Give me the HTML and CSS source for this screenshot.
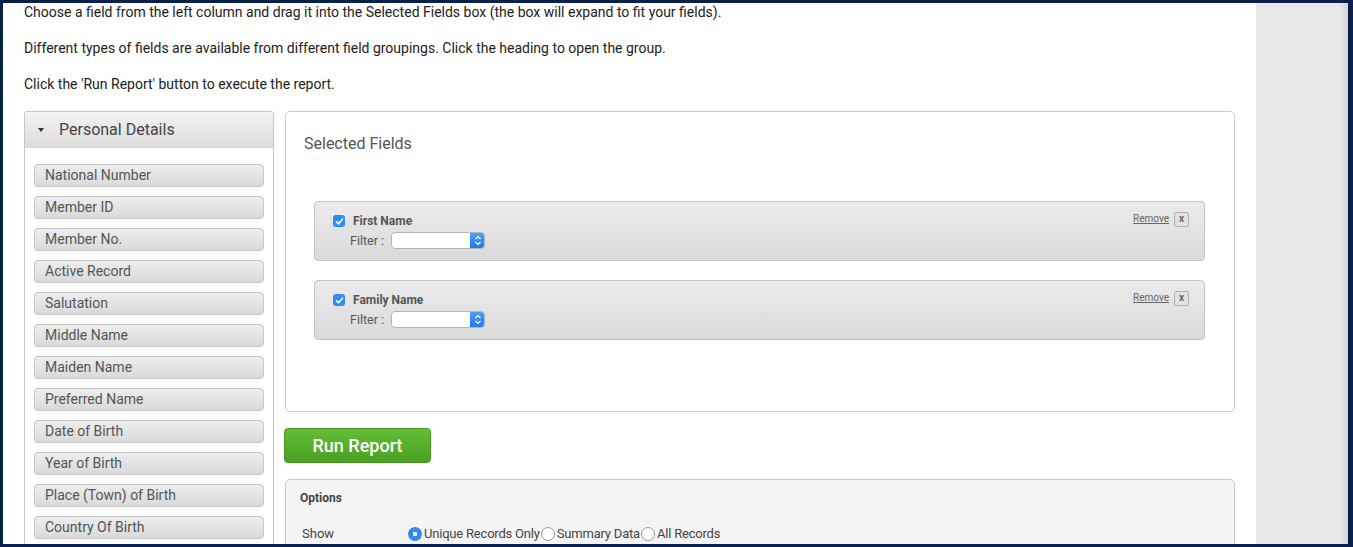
FILE: index.html
```html
<!DOCTYPE html>
<html>
<head>
<meta charset="utf-8">
<link rel="stylesheet" href="styles.css">
</head>
<body>
<div class="window">
  <div class="main">
    <p class="intro">Choose a field from the left column and drag it into the Selected Fields box (the box will expand to fit your fields).</p>
    <p class="intro">Different types of fields are available from different field groupings. Click the heading to open the group.</p>
    <p class="intro">Click the 'Run Report' button to execute the report.</p>
    <div class="builder">
      <div class="fields-panel">
        <div class="group-head"><span class="caret"></span>Personal Details</div>
        <div class="field-list">
          <div class="field-item">National Number</div>
          <div class="field-item">Member ID</div>
          <div class="field-item">Member No.</div>
          <div class="field-item">Active Record</div>
          <div class="field-item">Salutation</div>
          <div class="field-item">Middle Name</div>
          <div class="field-item">Maiden Name</div>
          <div class="field-item">Preferred Name</div>
          <div class="field-item">Date of Birth</div>
          <div class="field-item">Year of Birth</div>
          <div class="field-item">Place (Town) of Birth</div>
          <div class="field-item">Country Of Birth</div>
        </div>
      </div>
      <div class="right-col">
        <div class="selected-box">
          <h2 class="selected-title">Selected Fields</h2>
          <div class="selected-list">
            <div class="sel-row">
              <div class="sel-main">
                <div class="sel-name"><span class="check"><svg width="9" height="9" viewBox="0 0 9 9"><path d="M1.5 4.8 L3.6 6.8 L7.5 2.2" fill="none" stroke="#fff" stroke-width="1.6" stroke-linecap="round" stroke-linejoin="round"/></svg></span>First Name</div>
                <div class="sel-filter">Filter :<span class="select"><span class="sel-arrow"><svg width="8" height="11" viewBox="0 0 8 11"><path d="M1.5 4 L4 1.5 L6.5 4 M1.5 7 L4 9.5 L6.5 7" fill="none" stroke="#fff" stroke-width="1.2"/></svg></span></span></div>
              </div>
              <div class="sel-actions"><a class="remove">Remove</a><span class="xbtn">x</span></div>
            </div>
            <div class="sel-row">
              <div class="sel-main">
                <div class="sel-name"><span class="check"><svg width="9" height="9" viewBox="0 0 9 9"><path d="M1.5 4.8 L3.6 6.8 L7.5 2.2" fill="none" stroke="#fff" stroke-width="1.6" stroke-linecap="round" stroke-linejoin="round"/></svg></span>Family Name</div>
                <div class="sel-filter">Filter :<span class="select"><span class="sel-arrow"><svg width="8" height="11" viewBox="0 0 8 11"><path d="M1.5 4 L4 1.5 L6.5 4 M1.5 7 L4 9.5 L6.5 7" fill="none" stroke="#fff" stroke-width="1.2"/></svg></span></span></div>
              </div>
              <div class="sel-actions"><a class="remove">Remove</a><span class="xbtn">x</span></div>
            </div>
          </div>
        </div>
        <button class="run-btn">Run Report</button>
        <div class="options">
          <div class="options-title">Options</div>
          <div class="opt-row">
            <span class="opt-label">Show</span>
            <span class="radios">
              <span class="radio on"></span><span class="rlabel">Unique Records Only</span>
              <span class="radio"></span><span class="rlabel">Summary Data</span>
              <span class="radio"></span><span class="rlabel">All Records</span>
            </span>
          </div>
        </div>
      </div>
    </div>
  </div>
  <div class="sidebar"></div>
</div>
</body>
</html>
```
FILE: styles.css
```css
html, body {
  margin: 0;
  padding: 0;
  height: 100%;
  overflow: hidden;
}
body {
  background: #0b1f4d;
  font-family: Roboto, "Liberation Sans", sans-serif;
  color: #333;
}
.window {
  margin: 3px 5px 0 3px;
  height: 541px;
  display: flex;
  overflow: hidden;
}
.main {
  width: 1253px;
  flex: none;
  background: #fff;
  padding-left: 21px;
  box-sizing: border-box;
}
.sidebar {
  flex: 1;
  background: linear-gradient(to right, #e8e8e8 0, #e8e8e8 84px, #d4d4d4 92px);
}
.intro {
  margin: 0 0 18px;
  font-size: 14px;
  line-height: 18px;
  color: #222;
}
.builder {
  display: flex;
  align-items: flex-start;
  gap: 10px;
}
.fields-panel {
  width: 250px;
  flex: none;
  box-sizing: border-box;
  border: 1px solid #c4c4c4;
  border-radius: 3px 3px 0 0;
}
.group-head {
  height: 35px;
  display: flex;
  align-items: center;
  padding-left: 13px;
  font-size: 16px;
  color: #444;
  background: linear-gradient(#f3f3f3, #dcdcdc);
  border-bottom: 1px solid #d6d6d6;
}
.caret {
  width: 0;
  height: 0;
  border-left: 3.5px solid transparent;
  border-right: 3.5px solid transparent;
  border-top: 4px solid #333;
  margin-right: 15px;
  margin-top: 1px;
}
.field-list {
  padding: 16px 9px 20px;
  display: flex;
  flex-direction: column;
  gap: 9px;
}
.field-item {
  height: 23px;
  box-sizing: border-box;
  border: 1px solid #c6c6c6;
  border-radius: 4px;
  background: linear-gradient(#ededed, #dadada);
  padding-left: 10px;
  font-size: 14px;
  line-height: 21px;
  color: #555;
}
.right-col {
  width: 952px;
  flex: none;
  display: flex;
  flex-direction: column;
  align-items: flex-start;
}
.selected-box {
  width: 950px;
  box-sizing: border-box;
  height: 301px;
  border: 1px solid #c8c8c8;
  border-radius: 5px;
  margin-left: 1px;
}
.selected-title {
  margin: 0;
  padding: 22px 0 0 18px;
  font-size: 16px;
  font-weight: normal;
  line-height: 20px;
  color: #555;
}
.selected-list {
  margin: 47px 29px 0 28px;
  display: flex;
  flex-direction: column;
  gap: 19px;
}
.sel-row {
  height: 60px;
  box-sizing: border-box;
  border: 1px solid #c4c4c4;
  border-radius: 4px;
  background: linear-gradient(#ebebeb, #dadada);
  display: flex;
  justify-content: space-between;
  padding: 11px 15px 0 18px;
}
.sel-name {
  display: flex;
  align-items: center;
  font-size: 12px;
  font-weight: bold;
  color: #555;
  height: 16px;
}
.check {
  width: 12px;
  height: 12px;
  border-radius: 3px;
  background: #2f8cf0;
  display: inline-flex;
  align-items: center;
  justify-content: center;
  margin-right: 8px;
}
.sel-filter {
  margin-top: 3px;
  padding-left: 17px;
  display: flex;
  align-items: center;
  font-size: 12.5px;
  color: #555;
}
.select {
  margin-left: 7px;
  width: 94px;
  height: 17px;
  box-sizing: border-box;
  border: 1px solid #b5b5b5;
  border-radius: 4px;
  background: #fff;
  display: flex;
  justify-content: flex-end;
  overflow: hidden;
}
.sel-arrow {
  width: 15px;
  height: 17px;
  margin: -1px -1px 0 0;
  background: linear-gradient(#4ea1fb, #1e78f0);
  display: flex;
  align-items: center;
  justify-content: center;
}
.sel-actions {
  display: flex;
  align-items: flex-start;
  gap: 5px;
}
.remove {
  font-size: 10px;
  color: #666;
  text-decoration: underline;
  line-height: 12px;
  margin-top: 0;
}
.xbtn {
  width: 15px;
  height: 15px;
  box-sizing: border-box;
  border: 1px solid #b0b0b0;
  border-radius: 2px;
  background: #e2e2e2;
  font-size: 10px;
  font-weight: bold;
  color: #666;
  text-align: center;
  line-height: 12px;
  margin-top: -1px;
}
.run-btn {
  margin-top: 16px;
  width: 147px;
  height: 35px;
  border: 1px solid #47961f;
  border-radius: 4px;
  background: linear-gradient(#63bd35, #4aa023);
  color: #fff;
  font-family: inherit;
  font-size: 18px;
  font-weight: 500;
  padding: 0;
  cursor: pointer;
}
.options {
  margin-top: 16px;
  margin-left: 1px;
  width: 950px;
  height: 80px;
  box-sizing: border-box;
  border: 1px solid #c8c8c8;
  border-radius: 5px;
  background: #f4f4f4;
  padding: 10px 0 0 14px;
}
.options-title {
  font-size: 12px;
  font-weight: bold;
  color: #444;
  line-height: 16px;
}
.opt-row {
  margin-top: 20px;
  display: flex;
  align-items: center;
  font-size: 13px;
  color: #444;
  padding-left: 2px;
}
.opt-label {
  width: 106px;
}
.radios {
  display: flex;
  align-items: center;
}
.radio {
  width: 14px;
  height: 14px;
  box-sizing: border-box;
  border-radius: 50%;
  border: 1px solid #999;
  background: #fff;
  margin-right: 2px;
}
.radio.on {
  border: none;
  background: radial-gradient(circle, #fff 0, #fff 2px, #2f8cf0 2.5px);
}
.rlabel {
  margin-right: 1px;
  letter-spacing: -0.2px;
}
```
